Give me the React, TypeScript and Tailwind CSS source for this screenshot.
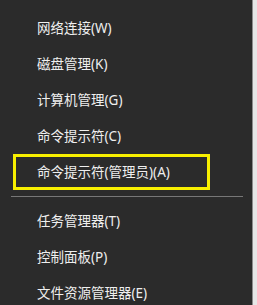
const topItems = ["网络连接(W)", "磁盘管理(K)", "计算机管理(G)", "命令提示符(C)"];
const bottomItems = ["任务管理器(T)", "控制面板(P)", "文件资源管理器(E)"];

function MenuItem({ label }: { label: string }) {
  return (
    <div className="flex h-[36px] items-center pl-[37px] text-[13.5px] text-[#efefef]">
      {label}
    </div>
  );
}

export default function App() {
  return (
    <div
      className="flex h-[305px] w-[257px] overflow-hidden"
      style={{ fontFamily: '"Noto Sans", "Noto Sans CJK SC", sans-serif' }}
    >
      <div className="w-[252px] bg-[#2b2b2b] pt-[10px]">
        {topItems.map((item) => (
          <MenuItem key={item} label={item} />
        ))}

        {/* highlighted item */}
        <div className="ml-[13px] flex h-[36px] w-[197px] items-center border-[3px] border-[#f7ef00] pl-[21px] text-[13.5px] text-[#efefef]">
          命令提示符(管理员)(A)
        </div>

        <div className="py-[6px]">
          <div className="ml-[11px] h-px w-[232px] bg-[#777777]" />
        </div>

        {bottomItems.map((item) => (
          <MenuItem key={item} label={item} />
        ))}
      </div>
      <div className="w-px bg-[#8c8c8c]" />
      <div className="flex-1 bg-[#e6e6e6]" />
    </div>
  );
}
